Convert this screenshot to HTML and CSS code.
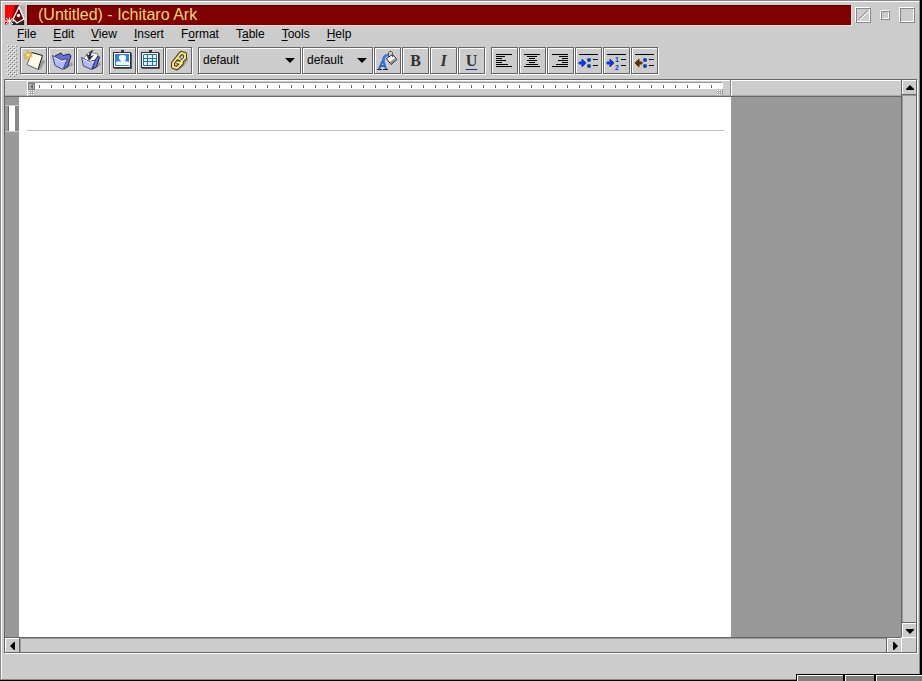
FILE: index.html
```html
<!DOCTYPE html>
<html lang="en">
<head>
    <meta charset="UTF-8">
    <meta name="viewport" content="width=device-width, initial-scale=1.0">
    <title>(Untitled) - Ichitaro Ark</title>
    <link rel="stylesheet" href="styles.css">
</head>
<body>

<div class="window">
    <header class="titlebar">
        <svg class="app-icon" viewBox="0 0 20 20">
            <rect width="20" height="20" fill="#b4b4b4"/>
            <path d="M0 0h14L8 16 0 20z" fill="#f40808"/>
            <path d="M10 0h4L8 18H4l3-6z" fill="#8a0808"/>
            <path d="M7 20l2-6 10 1v5z" fill="#222"/>
            <path d="M8 14L14 2l5 12-7 4z" fill="#780000" stroke="#fff" stroke-width="1.3"/>
            <circle cx="13.500" cy="10.500" r="1.700" fill="#fff"/>
            <path d="M1 13l7 6M8 13l-7 6M0 16h9M4.500 12v8" stroke="#fff" stroke-width="1"/>
        </svg>
        <h1 class="title">(Untitled) - Ichitaro Ark</h1>
        <div class="controls">
            <button class="control" aria-label="Iconify">
                <svg viewBox="0 0 14 14"><path d="M2.500 11.500L11.500 2.500" stroke="#888"/><path d="M3.500 12.500L12.500 3.500" stroke="#fff"/></svg>
            </button>
            <button class="control small" aria-label="Restore"></button>
            <button class="control" aria-label="Maximize"></button>
        </div>
    </header>

    <nav class="menu">
        <a href="#"><u>F</u>ile</a>
        <a href="#"><u>E</u>dit</a>
        <a href="#"><u>V</u>iew</a>
        <a href="#"><u>I</u>nsert</a>
        <a href="#">F<u>o</u>rmat</a>
        <a href="#">T<u>a</u>ble</a>
        <a href="#"><u>T</u>ools</a>
        <a href="#"><u>H</u>elp</a>
    </nav>

    <div class="toolbar">
        <div class="grip"></div>
        <div class="group">
            <button class="tool" aria-label="New">
                <svg viewBox="0 0 25 25">
                    <path d="M22 11l2 3-5 8h-3z" fill="#999"/>
                    <path d="M10.500 4.500l11 3-4.500 14-11-5z" fill="#fffde6"/>
                    <path d="M10.500 4.500l11 3-4.500 14" fill="none" stroke="#111"/>
                    <path d="M10.500 4.500l-4.500 12 11 5" fill="none" stroke="#666"/>
                    <path d="M6.500 2l1 3 3-1-1 3 2 1-3 1v3l-2-2-3 1 1-3-2-1 3-1z" fill="#f0c850" stroke="#c09020" stroke-width=".5"/>
                    <circle cx="7" cy="7" r="1" fill="#fff"/>
                </svg>
            </button>
            <button class="tool" aria-label="Open">
                <svg viewBox="0 0 25 25">
                    <path d="M18 18l5-4 1 3-9 5z" fill="#999"/>
                    <path d="M6 8l6-3 2 2.500 6.500-1.500 1.500 2-3 10-4 3z" fill="#6870d4" stroke="#222250"/>
                    <path d="M3.500 7.500l9 4.500 6-1.500-4.500 11-8-4z" fill="#b4bafa" stroke="#444480"/>
                    <path d="M5 9l8 4.500 4-1" fill="none" stroke="#e4e8ff"/>
                </svg>
            </button>
            <button class="tool" aria-label="Save">
                <svg viewBox="0 0 25 25">
                    <path d="M18 18l5-4 1 3-9 5z" fill="#999"/>
                    <path d="M7 10l5-6 9 2-2 9-6 3z" fill="#fff" stroke="#888"/>
                    <path d="M18 12l3-4 1.500 1-3 10-4 2z" fill="#6870d4" stroke="#222250"/>
                    <path d="M4.500 9.500l8 4 6-1.500-4 9.500-8-3.500z" fill="#b4bafa" stroke="#444480"/>
                    <path d="M6 11l6.500 3.500 4-1" fill="none" stroke="#e4e8ff"/>
                    <path d="M17 2c-2 1-3 4-3 6l3-1-5 6-3-7 3 1c0-3 2-5 5-5z" fill="#333344"/>
                </svg>
            </button>
        </div>
        <div class="group">
            <button class="tool" aria-label="Insert picture">
                <svg viewBox="0 0 25 25">
                    <path d="M4 20.500h17.500V5" fill="none" stroke="#555"/>
                    <rect x="3.500" y="4.500" width="17" height="15" fill="#fff" stroke="#333"/>
                    <rect x="5" y="6" width="14" height="12" fill="#2e86dc"/>
                    <path d="M6 17v-3l3-1 1 1 1-1-2-2V8l2-1h3l2 1v3l-1 2 4 1v3z" fill="#f4faff"/>
                    <path d="M11 2h3v3h-3z" fill="#334"/>
                </svg>
            </button>
            <button class="tool" aria-label="Insert table">
                <svg viewBox="0 0 25 25">
                    <path d="M4 20.500h17.500V5" fill="none" stroke="#555"/>
                    <rect x="3.500" y="4.500" width="17" height="15" fill="#fff" stroke="#333"/>
                    <path d="M5.500 6.500h13v11h-13zM9.500 7v11M14.500 7v11M5 10.500h13M5 13.500h13" fill="#e4f4ff" stroke="#2070c0"/>
                    <path d="M11 2h3v3h-3z" fill="#334"/>
                </svg>
            </button>
            <button class="tool" aria-label="Insert link">
                <svg viewBox="0 0 25 25">
                    <path d="M8 22l9-6 4-7 1 3-5 7-6 4z" fill="#999"/>
                    <g fill="none" stroke-linejoin="round">
                        <path d="M11 10l4-5 4 1v4l-5 5-3-1M14 11l-3-1-4 5v4l4 1 5-5-1-3" stroke="#443c10" stroke-width="4"/>
                        <path d="M11 10l4-5 4 1v4l-5 5-3-1M14 11l-3-1-4 5v4l4 1 5-5-1-3" stroke="#f4e688" stroke-width="2"/>
                    </g>
                </svg>
            </button>
        </div>
        <div class="group">
            <div class="combo font">
                <select aria-label="Font"><option>default</option></select>
                <svg viewBox="0 0 10 5"><path d="M0 0h10L5 5z"/></svg>
            </div>
            <div class="combo size">
                <select aria-label="Size"><option>default</option></select>
                <svg viewBox="0 0 10 5"><path d="M0 0h10L5 5z"/></svg>
            </div>
            <button class="tool" aria-label="Text color">
                <svg viewBox="0 0 25 25">
                    <path d="M4 21l4-9 3 9M6 18h4" fill="none" stroke="#2868c8" stroke-width="2"/>
                    <path d="M2 21.500h5M8 21.500h5" stroke="#223"/>
                    <path d="M7 13c0-5 2-7 6-7l1 2c-3 0-4 2-4 5z" fill="#3080e8"/>
                    <path d="M11.500 10.500l6-4 4.500 5-6 5z" fill="#fff" stroke="#222"/>
                    <path d="M16 16l6-4.500-1.500-1.500L15 14z" fill="#888"/>
                    <path d="M13.500 9V4.500l1-1h2l1 1V9" fill="none" stroke="#555"/>
                </svg>
            </button>
            <button class="tool letter bold">B</button>
            <button class="tool letter italic">I</button>
            <button class="tool letter under">U</button>
        </div>
        <div class="group">
            <button class="tool" aria-label="Align left">
                <svg viewBox="0 0 25 25"><path d="M4 6.500h16M4 8.500h9M4 10.500h6M4 12.500h10M4 14.500h6M4 16.500h12M4 18.500h16" stroke="#000"/></svg>
            </button>
            <button class="tool" aria-label="Align center">
                <svg viewBox="0 0 25 25"><path d="M4 6.500h16M7 8.500h10M9 10.500h6M7 12.500h10M9 14.500h6M6 16.500h12M4 18.500h16" stroke="#000"/></svg>
            </button>
            <button class="tool" aria-label="Align right">
                <svg viewBox="0 0 25 25"><path d="M4 6.500h16M11 8.500h9M14 10.500h6M10 12.500h10M14 14.500h6M8 16.500h12M4 18.500h16" stroke="#000"/></svg>
            </button>
            <button class="tool" aria-label="Bulleted list">
                <svg viewBox="0 0 25 25">
                    <path d="M3 6.500h19M17 11.500h5M17 17.500h5" stroke="#000"/>
                    <path d="M3 14h3v-3l4 4-4 4v-3H3z" fill="#1038e0" stroke="#1038e0"/>
                    <circle cx="13" cy="12" r="2" fill="#1040b0"/><circle cx="13" cy="18" r="2" fill="#1040b0"/>
                </svg>
            </button>
            <button class="tool" aria-label="Numbered list">
                <svg viewBox="0 0 25 25">
                    <path d="M3 6.500h19M17 11.500h5M17 17.500h5" stroke="#000"/>
                    <path d="M3 14h3v-3l4 4-4 4v-3H3z" fill="#1038e0" stroke="#1038e0"/>
                    <text x="11" y="14" class="digit">1</text><text x="11" y="22" class="digit">2</text>
                </svg>
            </button>
            <button class="tool" aria-label="Remove list">
                <svg viewBox="0 0 25 25">
                    <path d="M3 6.500h19M17 11.500h5M17 17.500h5" stroke="#000"/>
                    <path d="M10 14H7v-3l-4 4 4 4v-3h3z" fill="#603000" stroke="#603000"/>
                    <circle cx="13" cy="12" r="2" fill="#1040b0"/><circle cx="13" cy="18" r="2" fill="#1040b0"/>
                </svg>
            </button>
        </div>
    </div>

    <main class="frame">
        <div class="view">
            <div class="ruler">
                <div class="scale">
                    <div class="band">
                        <svg class="marker" viewBox="0 0 7 7"><rect width="7" height="7" fill="#777"/><rect x="1" y="1" width="5" height="5" fill="#bbb"/><path d="M5 1v5L2 3.500z" fill="#666"/></svg>
                        <div class="ticks"></div>
                    </div>
                    <div class="indents"><span class="dots"></span><span class="dots"></span></div>
                </div>
            </div>
            <div class="canvas">
                <div class="side-ruler"><div class="side-mark"></div></div>
                <div class="paper">
                    <div class="page-header"></div>
                    <textarea class="page-text" aria-label="Document"></textarea>
                </div>
            </div>
        </div>
        <div class="scroll vertical">
            <button aria-label="Scroll up"><svg viewBox="0 0 8 8"><path d="M0 6V5l4-4 4 4v1z"/></svg></button>
            <div class="track"></div>
            <button aria-label="Scroll down"><svg viewBox="0 0 8 8"><path d="M0 2v1l4 4 4-4V2z"/></svg></button>
        </div>
        <div class="scroll horizontal">
            <button aria-label="Scroll left"><svg viewBox="0 0 8 8"><path d="M6 0H5L1 4l4 4h1z"/></svg></button>
            <div class="track"></div>
            <button aria-label="Scroll right"><svg viewBox="0 0 8 8"><path d="M2 0h1l4 4-4 4H2z"/></svg></button>
        </div>
        <div class="corner"></div>
    </main>

    <footer class="status"></footer>
</div>

<!-- tops of the windows standing in front -->
<div class="tabs">
    <div class="tab wide"></div>
    <div class="tab"></div>
    <div class="tab wide"></div>
</div>

</body>
</html>
```

FILE: styles.css
```css
* {
    box-sizing: border-box;
}
body {
    margin: 0;
    background: #000;
    color: #000;
    font-family: "Liberation Sans", Arial, sans-serif;
    font-size: 12px;
    overflow: hidden;
}
button {
    margin: 0;
    padding: 0;
    border: none;
    border-radius: 0;
    background: #ccc;
    color: #333;
}
svg {
    display: block;
}
.window {
    display: flex;
    flex-direction: column;
    height: calc(100vh - 1px);
    margin-right: 2px;
    padding: 3px 2px 0 3px;
    background: #ccc;
    border: 1px solid #888;
    box-shadow: inset 1px 1px #fff;
}

/* title bar */
.titlebar {
    display: flex;
    align-items: center;
    gap: 2px;
    height: 22px;
    padding-left: 1px;
}
.app-icon {
    width: 20px;
    height: 20px;
}
.title {
    flex: 1;
    height: 20px;
    margin: 0;
    padding-left: 11px;
    background: #800000;
    color: #f0d870;
    font-size: 16px;
    font-weight: normal;
    line-height: 19px;
    box-shadow: inset 1px 1px #500, 1px 1px #fdd;
}
.controls {
    display: flex;
    align-items: center;
    gap: 9px;
    padding: 0 2px;
}
.control {
    width: 16px;
    height: 16px;
    border: 1px solid;
    border-color: #fff #888 #888 #fff;
    box-shadow: inset 1px 1px #888, inset -1px -1px #fff;
}
.control.small {
    width: 10px;
    height: 10px;
}

/* menu */
.menu {
    display: flex;
    gap: 17px;
    padding: 0 13px;
    height: 17px;
    line-height: 16px;
}
.menu a {
    color: #000;
    text-decoration: none;
}
.menu u {
    text-underline-offset: 2px;
}

/* toolbar */
.toolbar {
    display: flex;
    gap: 6px;
    padding: 4px 3px 5px;
}
.grip {
    width: 10px;
    height: 32px;
    margin: -2px -3px -3px 0;
    background-image:
        conic-gradient(from 270deg at 1px 1px, #777 25%, transparent 0),
        conic-gradient(from 270deg at 1px 1px, #777 25%, transparent 0),
        conic-gradient(from 270deg at 1px 1px, #fff 25%, transparent 0),
        conic-gradient(from 270deg at 1px 1px, #fff 25%, transparent 0);
    background-size: 4px 4px;
    background-position: 1px 1px, 3px 3px, 0 0, 2px 2px;
}
.group {
    display: flex;
    gap: 1px;
}
.tool, .combo {
    width: 27px;
    height: 27px;
    border: 1px solid #666;
    box-shadow: inset 1px 1px #fff, 1px 1px #fff;
}
.tool svg {
    width: 25px;
    height: 25px;
}
.letter {
    font-family: "Liberation Serif", serif;
    font-size: 16px;
    font-weight: bold;
}
.italic {
    font-style: italic;
}
.under {
    text-decoration: underline #223366 1px;
    text-underline-offset: 3px;
}
.digit {
    fill: #1040b0;
    font-size: 7px;
    font-weight: bold;
}
.combo {
    position: relative;
}
.combo.font {
    width: 103px;
}
.combo.size {
    width: 71px;
}
.combo select {
    appearance: none;
    width: 100%;
    height: 100%;
    padding: 0 4px 2px;
    border: none;
    background: transparent;
    color: #000;
    font: inherit;
}
.combo svg {
    position: absolute;
    top: 10px;
    right: 5px;
    width: 10px;
    height: 5px;
    pointer-events: none;
}

/* document frame */
.frame {
    flex: 1;
    display: grid;
    grid-template-columns: 1fr 15px;
    grid-template-rows: 1fr 15px;
    border: 1px solid #666;
    box-shadow: 1px 1px #fff;
}
.view {
    display: flex;
    flex-direction: column;
}
.ruler {
    height: 17px;
    border-bottom: 1px solid #666;
    box-shadow: inset 0 1px #fff, inset 0 -1px #aaa;
}
.scale {
    width: calc(79.5% - 8px);
    height: 16px;
    margin-left: 22px;
    padding: 2px 7px 0 0;
    border-left: 1px solid #fff;
    border-right: 1px solid #888;
    box-shadow: 1px 0 #fff;
}
.band {
    display: flex;
    height: 7px;
    border-top: 1px solid #999;
    border-right: 1px solid #fff;
}
.marker {
    width: 7px;
    height: 7px;
}
.ticks {
    flex: 1;
    background-color: #fff;
    background-image: conic-gradient(from 270deg at 1px 3px, #666 25%, transparent 0);
    background-size: 12px 12px;
    background-position: 4px 2px;
}
.indents {
    display: flex;
    justify-content: space-between;
    height: 6px;
    padding: 1px 0 0 1px;
    border-right: 1px solid #999;
}
.dots {
    width: 5px;
    height: 5px;
    background: conic-gradient(from 270deg at 1px 1px, #fff 25%, #aaa 0) 0 0 / 2px 2px;
}
.canvas {
    flex: 1;
    display: flex;
    background: #999;
}
.side-ruler {
    width: 14px;
    padding: 8px 0 0;
}
.side-mark {
    height: 27px;
    border: solid #ccc;
    border-width: 1px 0;
    background: linear-gradient(90deg, #999 3px, #666 3px, #666 4px, #fff 4px, #fff 10px, #888 10px);
}
.paper {
    display: flex;
    flex-direction: column;
    width: 79.5%;
    padding: 0 7px 0 8px;
    background: #fff;
}
.page-header {
    height: 34px;
    border-bottom: 1px solid #bbb;
}
.page-text {
    flex: 1;
    padding: 8px 0;
    border: none;
    outline: none;
    resize: none;
    font: inherit;
}

/* scroll bars */
.scroll {
    display: flex;
}
.scroll button {
    display: flex;
    align-items: center;
    justify-content: center;
    width: 14px;
    height: 14px;
    padding: 1px 0 0 1px;
    box-shadow: inset 1px 1px #fff;
}
.scroll svg {
    width: 8px;
    height: 8px;
}
.scroll .track {
    flex: 1;
    border: 1px solid #666;
    box-shadow: inset 1px 1px #999;
}
.vertical {
    flex-direction: column;
    border-left: 1px solid #666;
}
.vertical .track {
    border-width: 1px 0;
}
.horizontal {
    border-top: 1px solid #666;
}
.horizontal .track {
    border-width: 0 1px;
}
.corner {
    border: 1px solid #fff;
    border-width: 1px 0 0 1px;
}
.status {
    height: 26px;
}

.tabs {
    position: absolute;
    right: 0;
    bottom: 0;
    display: flex;
    gap: 2px;
    height: 7px;
    padding: 1px 0 0 1px;
    background: #000;
}
.tab {
    width: 29px;
    background: #808080;
    border-top: 1px solid #fff;
    border-left: 1px solid #fff;
}
.tab.wide {
    width: 46px;
}
```
